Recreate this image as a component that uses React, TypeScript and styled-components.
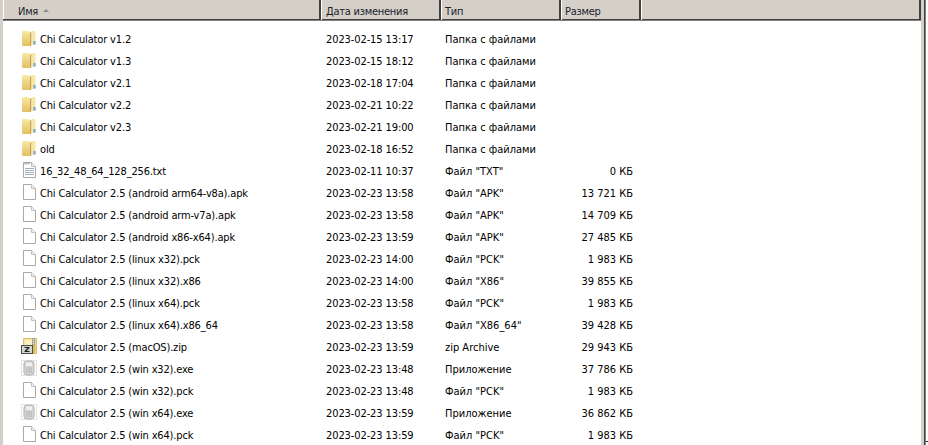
import React from "react";
import styled, { createGlobalStyle } from "styled-components";

type FileKind = "folder" | "text" | "blank" | "zip" | "exe";

interface FileRow {
  name: string;
  date: string;
  type: string;
  size?: string;
  kind: FileKind;
}

const FOLDER = "Папка с файлами";

const rows: FileRow[] = [
  { name: "Chi Calculator v1.2", date: "2023-02-15 13:17", type: FOLDER, kind: "folder" },
  { name: "Chi Calculator v1.3", date: "2023-02-15 18:12", type: FOLDER, kind: "folder" },
  { name: "Chi Calculator v2.1", date: "2023-02-18 17:04", type: FOLDER, kind: "folder" },
  { name: "Chi Calculator v2.2", date: "2023-02-21 10:22", type: FOLDER, kind: "folder" },
  { name: "Chi Calculator v2.3", date: "2023-02-21 19:00", type: FOLDER, kind: "folder" },
  { name: "old", date: "2023-02-18 16:52", type: FOLDER, kind: "folder" },
  { name: "16_32_48_64_128_256.txt", date: "2023-02-11 10:37", type: 'Файл "TXT"', size: "0 КБ", kind: "text" },
  { name: "Chi Calculator 2.5 (android arm64-v8a).apk", date: "2023-02-23 13:58", type: 'Файл "APK"', size: "13 721 КБ", kind: "blank" },
  { name: "Chi Calculator 2.5 (android arm-v7a).apk", date: "2023-02-23 13:58", type: 'Файл "APK"', size: "14 709 КБ", kind: "blank" },
  { name: "Chi Calculator 2.5 (android x86-x64).apk", date: "2023-02-23 13:59", type: 'Файл "APK"', size: "27 485 КБ", kind: "blank" },
  { name: "Chi Calculator 2.5 (linux x32).pck", date: "2023-02-23 14:00", type: 'Файл "PCK"', size: "1 983 КБ", kind: "blank" },
  { name: "Chi Calculator 2.5 (linux x32).x86", date: "2023-02-23 14:00", type: 'Файл "X86"', size: "39 855 КБ", kind: "blank" },
  { name: "Chi Calculator 2.5 (linux x64).pck", date: "2023-02-23 13:58", type: 'Файл "PCK"', size: "1 983 КБ", kind: "blank" },
  { name: "Chi Calculator 2.5 (linux x64).x86_64", date: "2023-02-23 13:58", type: 'Файл "X86_64"', size: "39 428 КБ", kind: "blank" },
  { name: "Chi Calculator 2.5 (macOS).zip", date: "2023-02-23 13:59", type: "zip Archive", size: "29 943 КБ", kind: "zip" },
  { name: "Chi Calculator 2.5 (win x32).exe", date: "2023-02-23 13:48", type: "Приложение", size: "37 786 КБ", kind: "exe" },
  { name: "Chi Calculator 2.5 (win x32).pck", date: "2023-02-23 13:48", type: 'Файл "PCK"', size: "1 983 КБ", kind: "blank" },
  { name: "Chi Calculator 2.5 (win x64).exe", date: "2023-02-23 13:59", type: "Приложение", size: "36 862 КБ", kind: "exe" },
  { name: "Chi Calculator 2.5 (win x64).pck", date: "2023-02-23 13:59", type: 'Файл "PCK"', size: "1 983 КБ", kind: "blank" },
];

const columns = [
  { label: "Имя", width: 318, pad: 15, sorted: true },
  { label: "Дата изменения", width: 120, pad: 5 },
  { label: "Тип", width: 120, pad: 4 },
  { label: "Размер", width: 80, pad: 4 },
];

const GlobalStyle = createGlobalStyle`
  html, body {
    margin: 0;
    height: 100%;
    background: #ffffff;
    overflow: hidden;
  }
  body {
    font-family: "DejaVu Sans Condensed", "DejaVu Sans", sans-serif;
    font-stretch: condensed;
    font-size: 11px;
    color: #000000;
  }
`;

const Window = styled.div`
  width: 928px;
  height: 445px;
  display: flex;
  background: #ffffff;
`;

const SideGutter = styled.div`
  width: 3px;
  background: #d4d0c8;
`;

const Main = styled.div`
  width: 918px;
  display: flex;
  flex-direction: column;
`;

const HeaderBar = styled.div`
  height: 22px;
  box-sizing: border-box;
  display: flex;
  background: #d4d0c8;
  border-bottom: 1px solid #808080;
  box-shadow: inset 0 -1px 0 #404040, inset 1px 0 0 #ffffff;
`;

const HeaderCell = styled.div<{ $width?: number; $pad?: number }>`
  ${(p) => (p.$width ? `width: ${p.$width}px;` : "flex: 1;")}
  box-sizing: border-box;
  height: 20px;
  display: flex;
  align-items: center;
  gap: 5px;
  padding-top: 2px;
  padding-left: ${(p) => p.$pad ?? 0}px;
  border-right: 2px solid #404040;
  box-shadow: 1px 0 0 #ffffff;
  color: #1c1c2c;
  letter-spacing: -0.25px;
  &:last-child {
    box-shadow: none;
  }
`;

const SortArrow = styled.span`
  width: 0;
  height: 0;
  margin-top: -2px;
  border-left: 3px solid transparent;
  border-right: 3px solid transparent;
  border-bottom: 3px solid #8a8a8a;
`;

const List = styled.div`
  padding-top: 6px;
`;

const Row = styled.div`
  height: 22px;
  display: flex;
  align-items: center;
`;

const NameCell = styled.div`
  width: 323px;
  box-sizing: border-box;
  padding-left: 18px;
  display: flex;
  align-items: center;
  gap: 3px;
  white-space: nowrap;
`;

const NameLabel = styled.span`
  padding-top: 2px;
  letter-spacing: -0.16px;
`;

const DateCell = styled.div`
  width: 119px;
  padding-top: 2px;
  letter-spacing: -0.1px;
`;

const TypeCell = styled.div`
  width: 120px;
  padding-top: 2px;
`;

const SizeCell = styled.div`
  width: 68px;
  padding-top: 2px;
  text-align: right;
`;

const EdgeBar = styled.div`
  width: 7px;
  display: flex;
`;

const EdgeLight = styled.div`
  width: 3px;
  background: #d4d0c8;
`;

const EdgeDark = styled.div`
  width: 2px;
  background: linear-gradient(90deg, #404040 50%, #808080 50%);
`;

const EdgeTick = styled.div`
  width: 2px;
  height: 1px;
  margin-top: 441px;
  background: #303030;
`;

const Icon: React.FC<{ kind: FileKind }> = ({ kind }) => {
  if (kind === "folder") {
    return (
      <svg width="16" height="17" viewBox="0 0 16 17">
        <defs>
          <linearGradient id="folderBack" x1="0" y1="0" x2="0" y2="1">
            <stop offset="0" stopColor="#f8e9a6" />
            <stop offset="1" stopColor="#e4bf62" />
          </linearGradient>
        </defs>
        <path d="M1 2Q1 1 2 1H7L9 2V16H2.500Q1 16 1 14.500z" fill="url(#folderBack)" />
        <path d="M9 3L10.500 1.500V15L9 16.500z" fill="#c9a34b" />
        <path d="M10.500 1H13.500L14.500 2V15H10.500z" fill="#f6e6a8" />
        <path d="M12.500 11h2v3.500h-2z" fill="#6aa4d6" />
      </svg>
    );
  }
  if (kind === "zip") {
    return (
      <svg width="16" height="16" viewBox="0 0 16 16">
        <path d="M2.500 .5H15.500V15.500H2.500z" fill="#f1d77c" stroke="#c9aa55" strokeWidth=".7" />
        <path d="M3.500 1.500H11V7H3.500z" fill="#fbf0bd" />
        <path d="M11 0H14V15H11z" fill="#a8a594" />
        <path d="M12 1h1v1h-1zM12 3h1v1h-1zM12 5h1v1h-1z" fill="#f4f4f4" />
        <path d="M11.500 7h2v8h-2z" fill="#e9c24a" />
        <rect x=".5" y="7.500" width="11" height="8" fill="#d5d5d0" stroke="#4a4a4a" />
        <path d="M3.500 9H8.500V10L5.500 13H8.500V14H3.500V13L6.500 10H3.500z" fill="#1f1f1f" />
      </svg>
    );
  }
  if (kind === "exe") {
    return (
      <svg width="16" height="16" viewBox="0 0 16 16">
        <rect x=".5" y=".5" width="15" height="15" fill="#fafafa" stroke="#e6e6e6" />
        <rect x="3" y="1" width="10" height="14" rx="3" fill="#d6d6d6" stroke="#b2b2b2" />
        <rect x="5" y="2.500" width="6" height="3.500" fill="#f0f0f0" />
        <path d="M5 8h6M5 10h6M5 12h6" stroke="#a8a8a8" strokeDasharray="1.500 .7" />
      </svg>
    );
  }
  return (
    <svg width="16" height="16" viewBox="0 0 16 16">
      <path d="M2.500 .5H10.500L14.500 4.500V15.500H2.500z" fill="#ffffff" stroke="#a9a9a9" />
      <path d="M10.500 .5V4.500H14.500" fill="#eeeeee" stroke="#c0c0c0" />
      {kind === "text" && (
        <>
          <path d="M4 .5v2M6 .5v2M8 .5v2" stroke="#8a8a8a" />
          <path d="M4 6.500h9M4 8.500h9M4 10.500h9M4 12.500h9" stroke="#a3aebb" />
        </>
      )}
    </svg>
  );
};

const App: React.FC = () => (
  <>
    <GlobalStyle />
    <Window>
      <SideGutter />
      <Main>
        <HeaderBar>
          {columns.map((c) => (
            <HeaderCell key={c.label} $width={c.width} $pad={c.pad}>
              {c.label}
              {c.sorted && <SortArrow />}
            </HeaderCell>
          ))}
          <HeaderCell />
        </HeaderBar>
        <List>
          {rows.map((r) => (
            <Row key={r.name}>
              <NameCell>
                <Icon kind={r.kind} />
                <NameLabel>{r.name}</NameLabel>
              </NameCell>
              <DateCell>{r.date}</DateCell>
              <TypeCell>{r.type}</TypeCell>
              <SizeCell>{r.size}</SizeCell>
            </Row>
          ))}
        </List>
      </Main>
      <EdgeBar>
        <EdgeLight />
        <EdgeDark />
        <EdgeTick />
      </EdgeBar>
    </Window>
  </>
);

export default App;
